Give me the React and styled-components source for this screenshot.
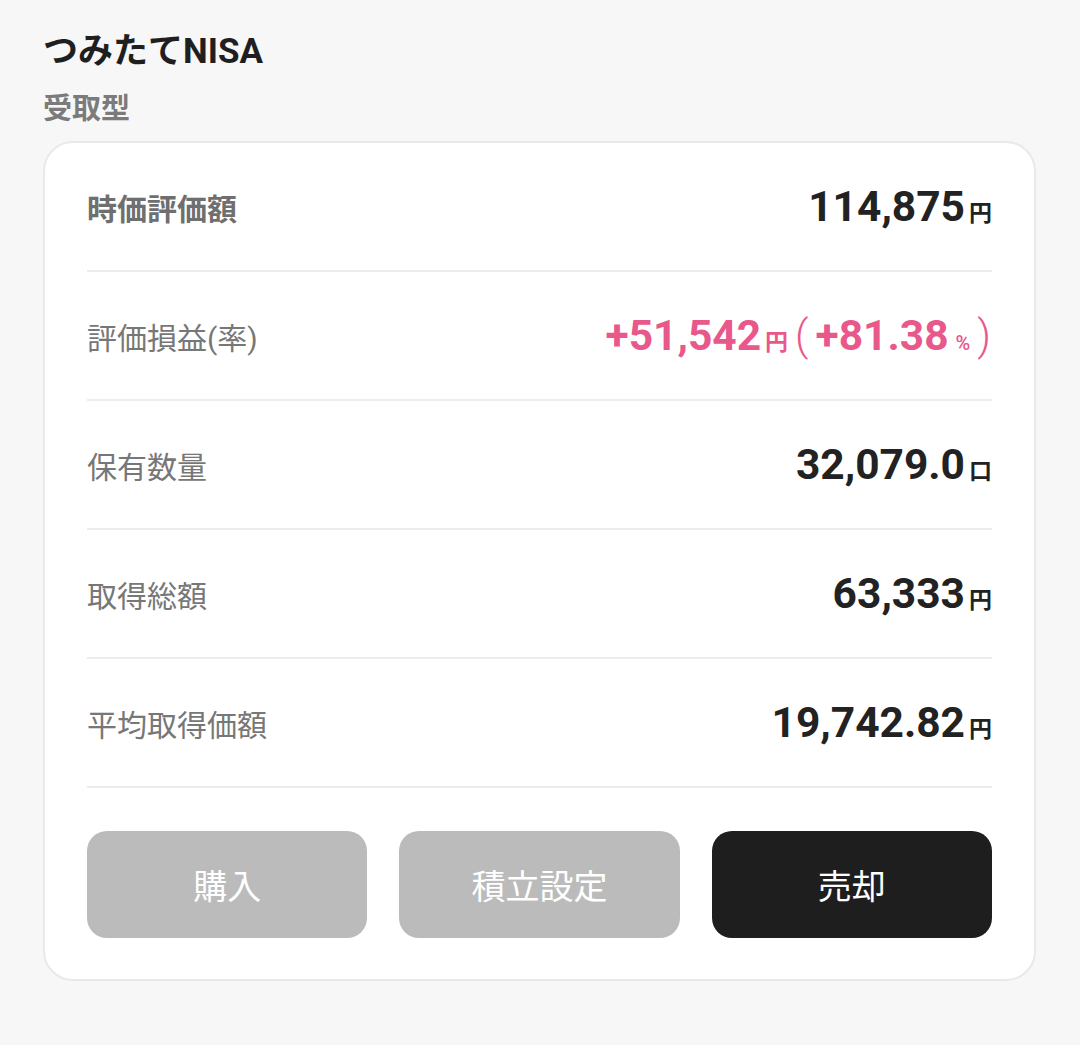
import React from "react";
import styled, { createGlobalStyle } from "styled-components";

const GlobalStyle = createGlobalStyle`
  html, body {
    margin: 0;
    padding: 0;
    background: #f7f7f7;
  }
  body {
    font-family: Roboto, "Noto Sans CJK JP", sans-serif;
  }
`;

const rows = [
  { label: "時価評価額", value: "114,875", unit: "円", strong: true },
  { label: "評価損益(率)", gain: { value: "+51,542", rate: "+81.38" } },
  { label: "保有数量", value: "32,079.0", unit: "口" },
  { label: "取得総額", value: "63,333", unit: "円" },
  { label: "平均取得価額", value: "19,742.82", unit: "円" },
];

function App() {
  return (
    <Page>
      <GlobalStyle />
      <Title>つみたてNISA</Title>
      <Subtitle>受取型</Subtitle>
      <Card>
        {rows.map((r) => (
          <Row key={r.label}>
            <Label strong={r.strong}>{r.label}</Label>
            {r.gain ? (
              <Value color="#e8588a">
                {r.gain.value}
                <Unit>円</Unit>
                <Paren>(</Paren>
                {r.gain.rate}
                <Percent>%</Percent>
                <Paren last>)</Paren>
              </Value>
            ) : (
              <Value>
                {r.value}
                <Unit>{r.unit}</Unit>
              </Value>
            )}
          </Row>
        ))}
        <Buttons>
          <Button>購入</Button>
          <Button>積立設定</Button>
          <Button primary>売却</Button>
        </Buttons>
      </Card>
    </Page>
  );
}

export default App;

const Page = styled.div`
  padding: 27px 44px 64px 43px;
  min-height: 1045px;
  box-sizing: border-box;
`;

const Title = styled.h1`
  margin: 0;
  font-size: 35px;
  line-height: 50px;
  font-weight: 700;
  color: #1f1f1f;
`;

const Subtitle = styled.h2`
  margin: 12px 0 0;
  font-size: 29px;
  line-height: 40px;
  font-weight: 700;
  color: #7b7b7b;
`;

const Card = styled.div`
  margin-top: 12px;
  background: #fff;
  border: 2px solid #e9e9e9;
  border-radius: 30px;
  padding: 0 42px 41px;
`;

const Row = styled.div`
  display: flex;
  align-items: center;
  justify-content: space-between;
  height: 127px;
  border-bottom: 2px solid #ececec;
`;

const Label = styled.div`
  font-size: 30px;
  font-weight: ${(p) => (p.strong ? 700 : 400)};
  color: ${(p) => (p.strong ? "#6f6f6f" : "#777")};
`;

const Value = styled.div`
  display: flex;
  align-items: baseline;
  font-family: Roboto, "Noto Sans CJK JP", sans-serif;
  font-size: 42.5px;
  font-weight: 700;
  color: ${(p) => p.color || "#222"};
`;

const Unit = styled.span`
  font-size: 23px;
  font-weight: 700;
  margin-left: 4px;
`;

const Paren = styled.span`
  font-size: 42px;
  font-weight: 300;
  margin: ${(p) => (p.last ? "0 1px 0 7px" : "0 7px")};
`;

const Percent = styled.span`
  font-size: 20px;
  font-weight: 500;
  margin-left: 7px;
`;

const Buttons = styled.div`
  display: grid;
  grid-template-columns: repeat(3, 1fr);
  gap: 32px;
  margin-top: 43px;
`;

const Button = styled.button`
  height: 107px;
  border: none;
  border-radius: 20px;
  background: ${(p) => (p.primary ? "#1e1e1e" : "#bbbbbb")};
  color: #fff;
  font-family: "Noto Sans CJK JP", sans-serif;
  font-size: 34px;
  font-weight: 400;
`;
